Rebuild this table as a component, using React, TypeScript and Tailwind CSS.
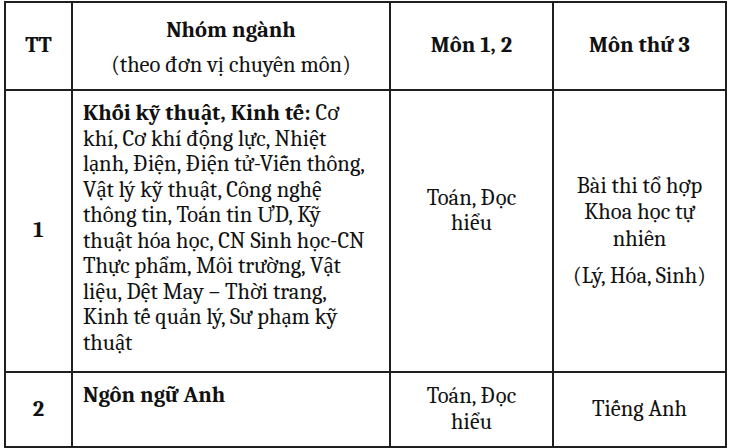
export default function App() {
  const cell = "border-2 border-[#1f1f1f]";
  return (
    <div className="bg-white w-[730px] h-[448px] pl-[4px] pt-[1px] font-serif text-[#111] text-[22.5px] leading-[25.5px]">
      <table className="table-fixed border-collapse w-[721px]">
        <colgroup>
          <col className="w-[67px]" />
          <col className="w-[318px]" />
          <col className="w-[163px]" />
          <col className="w-[173px]" />
        </colgroup>
        <thead>
          <tr className="h-[88px]">
            <th className={`${cell} font-bold align-middle text-center`}>TT</th>
            <th className={`${cell} align-middle text-center pt-[4px]`}>
              <div className="font-bold">Nhóm ngành</div>
              <div className="font-normal mt-[10px]">(theo đơn vị chuyên môn)</div>
            </th>
            <th className={`${cell} font-bold align-middle text-center`}>Môn 1, 2</th>
            <th className={`${cell} font-bold align-middle text-center`}>Môn thứ 3</th>
          </tr>
        </thead>
        <tbody>
          <tr className="h-[282px]">
            <td className={`${cell} font-bold align-middle text-center`}>1</td>
            <td className={`${cell} align-top pt-[10px] pl-[10px] whitespace-nowrap`}>
              <div>
                <span className="font-bold">Khối kỹ thuật, Kinh tế:</span> Cơ
              </div>
              <div>khí, Cơ khí động lực, Nhiệt</div>
              <div>lạnh, Điện, Điện tử-Viễn thông,</div>
              <div>Vật lý kỹ thuật, Công nghệ</div>
              <div>thông tin, Toán tin ƯD, Kỹ</div>
              <div>thuật hóa học, CN Sinh học-CN</div>
              <div>Thực phẩm, Môi trường, Vật</div>
              <div>liệu, Dệt May – Thời trang,</div>
              <div>Kinh tế quản lý, Sư phạm kỹ</div>
              <div>thuật</div>
            </td>
            <td className={`${cell} align-middle text-center pb-[40px]`}>
              <div>Toán, Đọc</div>
              <div>hiểu</div>
            </td>
            <td className={`${cell} align-middle text-center leading-[26.5px]`}>
              <div>Bài thi tổ hợp</div>
              <div>Khoa học tự</div>
              <div>nhiên</div>
              <div className="mt-[11px]">(Lý, Hóa, Sinh)</div>
            </td>
          </tr>
          <tr className="h-[75px]">
            <td className={`${cell} font-bold align-middle text-center`}>2</td>
            <td className={`${cell} align-top pt-[10px] pl-[10px] font-bold`}>Ngôn ngữ Anh</td>
            <td className={`${cell} align-middle text-center`}>
              <div>Toán, Đọc</div>
              <div>hiểu</div>
            </td>
            <td className={`${cell} align-middle text-center`}>Tiếng Anh</td>
          </tr>
        </tbody>
      </table>
    </div>
  );
}
